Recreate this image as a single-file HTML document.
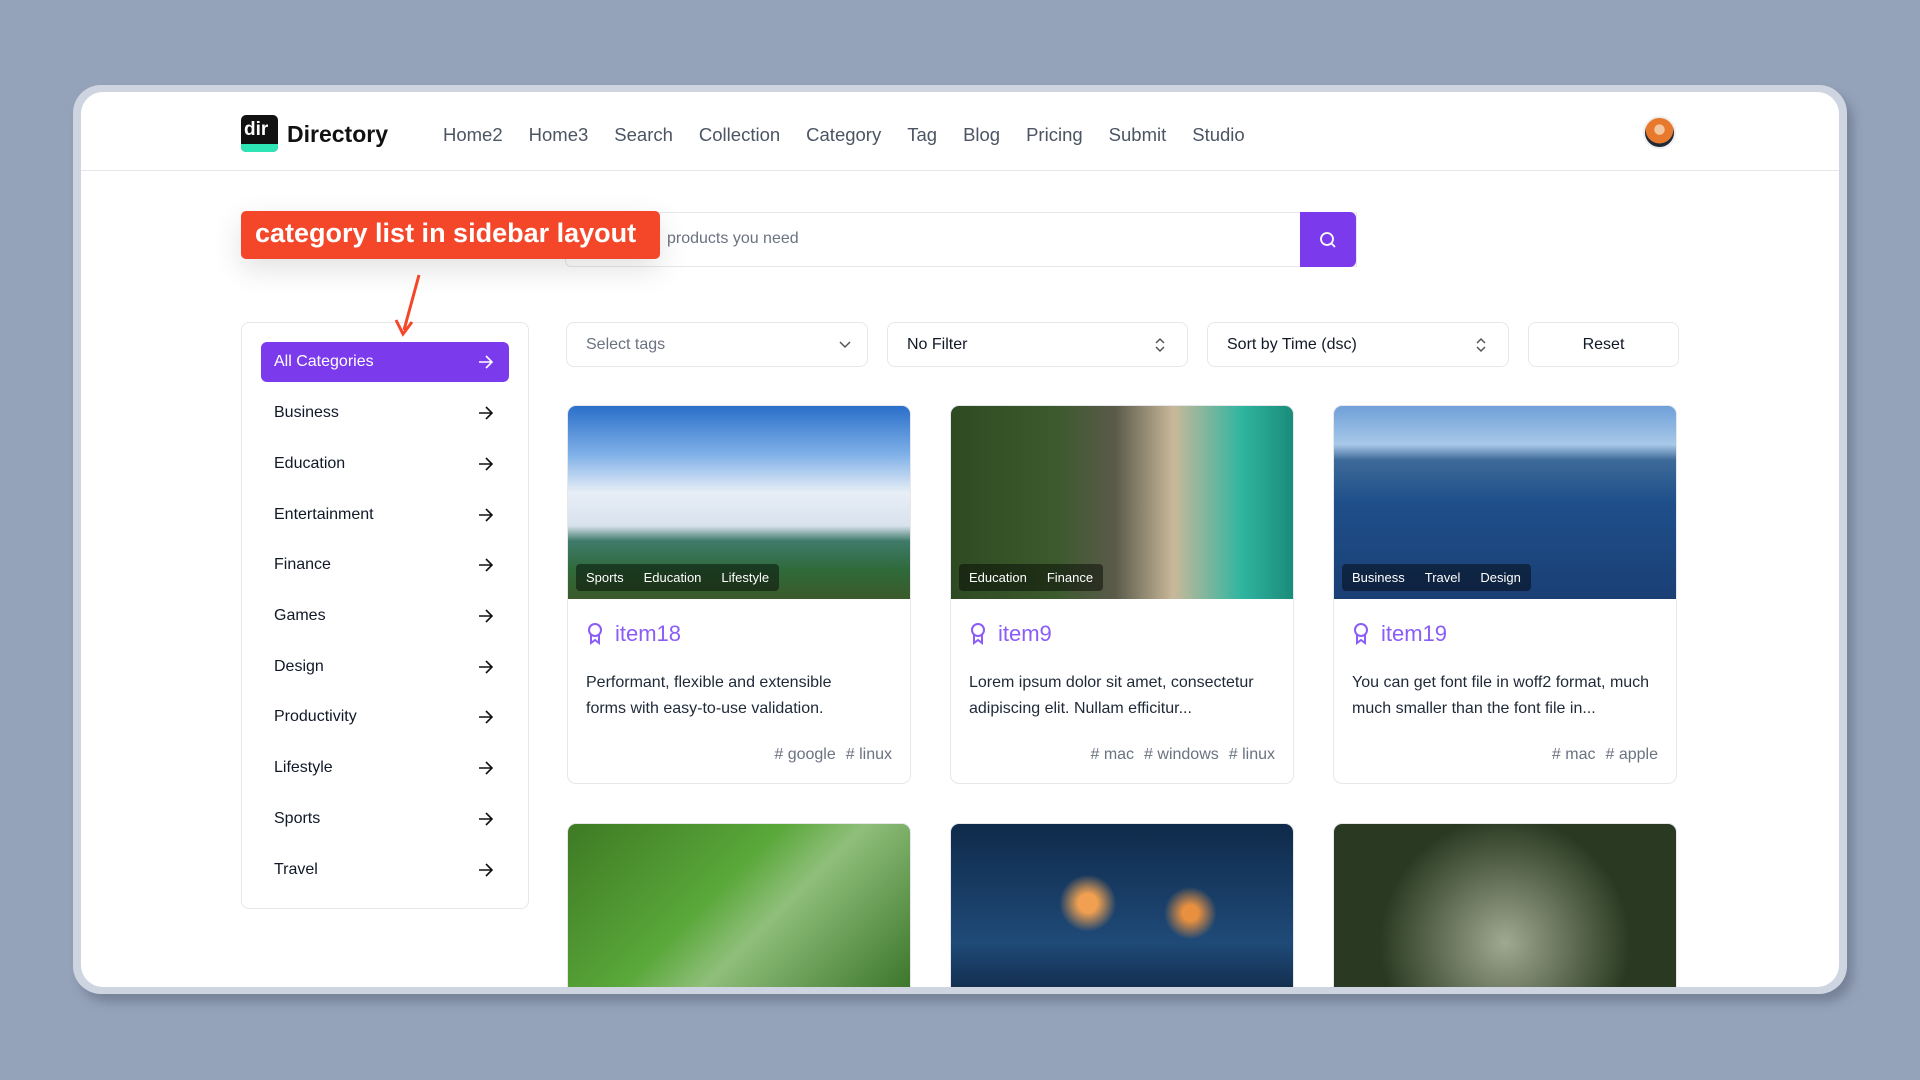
<!DOCTYPE html>
<html><head><meta charset="utf-8"><style>
*{box-sizing:border-box;margin:0;padding:0}
body{width:1920px;height:1080px;background:#95a3ba;font-family:"Liberation Sans",sans-serif;position:relative;overflow:hidden;color:#111827}
.frame{position:absolute;left:73px;top:85px;width:1774px;height:909px;background:#cfd5e0;border-radius:28px;box-shadow:6px 8px 10px rgba(60,70,90,.35)}
.inner{position:absolute;left:81px;top:92px;width:1758px;height:895px;background:#fff;border-radius:22px;overflow:hidden}
.a{position:absolute}
.nav{position:absolute;font-size:18.5px;color:#4b5563;white-space:nowrap}
.nav span{margin-right:26px}
.hdr{position:absolute;left:0;top:78px;width:100%;height:1px;background:#e5e7eb}
.box{border:1px solid #e5e7eb;border-radius:8px;background:#fff}
.cat{position:absolute;left:19px;width:248px;height:40px;font-size:16px;display:flex;align-items:center;padding-left:13px;color:#111827}
.cat svg{position:absolute;right:15px;top:13px}
.card{position:absolute;width:344px;height:379px;border:1px solid #e5e7eb;border-radius:9px;overflow:hidden;background:#fff}
.img{height:193px;position:relative}
.tags{position:absolute;left:8px;bottom:8px;display:flex;background:rgba(0,0,0,.45);border-radius:4px}
.tags span{color:#fff;font-size:13px;padding:6px 10px}
.title{position:absolute;left:19px;top:215px;font-size:22px;color:#8b5cf6;display:flex;align-items:center;gap:12px}
.desc{position:absolute;left:18px;top:264px;width:280px;font-size:16px;line-height:26px;color:#1f2937}
.ht{position:absolute;right:18px;top:340px;font-size:16px;color:#6b7280}
.ht b{font-weight:normal;margin-left:10px}
.flt{position:absolute;top:230px;height:45px;font-size:16px;display:flex;align-items:center;padding-left:19px}
</style></head><body>
<div class="frame"></div>
<div class="inner">
 <div class="a" style="left:160px;top:23px;width:37px;height:37px;background:#111;border-radius:5px;overflow:hidden">
  <div style="color:#fff;font-weight:bold;font-size:19px;position:absolute;left:3px;top:4px">dir</div>
  <div style="position:absolute;left:0;bottom:0;width:100%;height:8px;background:#2ee6b5"></div>
 </div>
 <div class="a" style="left:206px;top:29px;font-size:23px;font-weight:bold;color:#111">Directory</div>
 <div class="nav" style="left:362px;top:32px"><span>Home2</span><span>Home3</span><span>Search</span><span>Collection</span><span>Category</span><span>Tag</span><span>Blog</span><span>Pricing</span><span>Submit</span><span>Studio</span></div>
 <div class="a" style="left:1562px;top:24px;width:33px;height:33px;border-radius:50%;background:radial-gradient(circle at 50% 40%,#f3c7a0 0 22%,#e8782c 24% 60%,#1f2937 62%);border:2px solid #eee"></div>
 <div class="hdr"></div>

 <div class="a box" style="left:484px;top:120px;width:792px;height:55px;border-radius:6px 0 0 6px"></div>
 <div class="a" style="left:586px;top:138px;font-size:16px;color:#6b7280">products you need</div>
 <div class="a" style="left:1219px;top:120px;width:56px;height:55px;background:#7c3aed;border-radius:0 6px 6px 0"><svg style="position:absolute;left:19px;top:19px" width="18" height="18" viewBox="0 0 18 18" fill="none" stroke="#fff" stroke-width="1.8"><circle cx="8" cy="8" r="6"/><path d="M12.5 12.5L16 16"/></svg></div>
 <div class="a" style="left:160px;top:119px;width:419px;height:48px;background:#f4472a;border-radius:5px;box-shadow:0 10px 30px rgba(0,0,0,.12);color:#fff;font-size:27px;font-weight:bold;padding:7px 0 0 14px;white-space:nowrap">category list in sidebar layout</div>

 <div class="a box" style="left:160px;top:230px;width:288px;height:587px">
  <div class="cat" style="top:19px;background:#7c3aed;color:#fff;border-radius:6px">All Categories<svg width="16" height="14" viewBox="0 0 16 14" fill="none" stroke="#fff" stroke-width="1.6"><path d="M1 7h13M8 1l6 6-6 6"/></svg></div>
 </div>
 <svg class="a" style="left:300px;top:180px;z-index:5" width="40" height="65"><path d="M38 3L23 58" stroke="#f4472a" stroke-width="3"/><path d="M15 48L22 62L31 50" stroke="#f4472a" stroke-width="3" fill="none"/></svg>
 <div class="a" style="left:161px;top:231px;width:288px">
  <div class="cat" style="top:70px">Business<svg width="16" height="14" viewBox="0 0 16 14" fill="none" stroke="#111" stroke-width="1.6"><path d="M1 7h13M8 1l6 6-6 6"/></svg></div>
  <div class="cat" style="top:121px">Education<svg width="16" height="14" viewBox="0 0 16 14" fill="none" stroke="#111" stroke-width="1.6"><path d="M1 7h13M8 1l6 6-6 6"/></svg></div>
  <div class="cat" style="top:172px">Entertainment<svg width="16" height="14" viewBox="0 0 16 14" fill="none" stroke="#111" stroke-width="1.6"><path d="M1 7h13M8 1l6 6-6 6"/></svg></div>
  <div class="cat" style="top:222px">Finance<svg width="16" height="14" viewBox="0 0 16 14" fill="none" stroke="#111" stroke-width="1.6"><path d="M1 7h13M8 1l6 6-6 6"/></svg></div>
  <div class="cat" style="top:273px">Games<svg width="16" height="14" viewBox="0 0 16 14" fill="none" stroke="#111" stroke-width="1.6"><path d="M1 7h13M8 1l6 6-6 6"/></svg></div>
  <div class="cat" style="top:324px">Design<svg width="16" height="14" viewBox="0 0 16 14" fill="none" stroke="#111" stroke-width="1.6"><path d="M1 7h13M8 1l6 6-6 6"/></svg></div>
  <div class="cat" style="top:374px">Productivity<svg width="16" height="14" viewBox="0 0 16 14" fill="none" stroke="#111" stroke-width="1.6"><path d="M1 7h13M8 1l6 6-6 6"/></svg></div>
  <div class="cat" style="top:425px">Lifestyle<svg width="16" height="14" viewBox="0 0 16 14" fill="none" stroke="#111" stroke-width="1.6"><path d="M1 7h13M8 1l6 6-6 6"/></svg></div>
  <div class="cat" style="top:476px">Sports<svg width="16" height="14" viewBox="0 0 16 14" fill="none" stroke="#111" stroke-width="1.6"><path d="M1 7h13M8 1l6 6-6 6"/></svg></div>
  <div class="cat" style="top:527px">Travel<svg width="16" height="14" viewBox="0 0 16 14" fill="none" stroke="#111" stroke-width="1.6"><path d="M1 7h13M8 1l6 6-6 6"/></svg></div>
 </div>

 <div class="flt box" style="left:485px;width:302px;color:#6b7280">Select tags<svg style="position:absolute;right:16px;top:18px" width="12" height="8" fill="none" stroke="#555" stroke-width="1.5"><path d="M1 1l5 5 5-5"/></svg></div>
 <div class="flt box" style="left:806px;width:301px">No Filter<svg style="position:absolute;right:22px;top:14px" width="10" height="16" fill="none" stroke="#555" stroke-width="1.5"><path d="M1 6l4-4 4 4M1 10l4 4 4-4"/></svg></div>
 <div class="flt box" style="left:1126px;width:302px">Sort by Time (dsc)<svg style="position:absolute;right:22px;top:14px" width="10" height="16" fill="none" stroke="#555" stroke-width="1.5"><path d="M1 6l4-4 4 4M1 10l4 4 4-4"/></svg></div>
 <div class="flt box" style="left:1447px;width:151px;justify-content:center;padding:0">Reset</div>

 <div class="card" style="left:486px;top:313px">
  <div class="img" style="background:linear-gradient(180deg,#2a6fc9 0%,#7fb0e8 25%,#e8eef6 45%,#d8e2ee 62%,#3f7a6a 70%,#2f6a3a 85%,#3b5a2a 100%)"><div class="tags"><span>Sports</span><span>Education</span><span>Lifestyle</span></div></div>
  <div class="title"><svg width="16" height="22" viewBox="0 0 16 22" fill="none" stroke="#8b5cf6" stroke-width="2"><circle cx="8" cy="7" r="6"/><path d="M4 12v8l4-3 4 3v-8"/></svg>item18</div>
  <div class="desc">Performant, flexible and extensible forms with easy-to-use validation.</div>
  <div class="ht"><b># google</b><b># linux</b></div>
 </div>
 <div class="card" style="left:869px;top:313px">
  <div class="img" style="background:linear-gradient(90deg,#2e4a22 0%,#3b5a2c 30%,#5a5a4a 48%,#c9b89a 65%,#2fb5a0 85%,#1a8c7a 100%)"><div class="tags"><span>Education</span><span>Finance</span></div></div>
  <div class="title"><svg width="16" height="22" viewBox="0 0 16 22" fill="none" stroke="#8b5cf6" stroke-width="2"><circle cx="8" cy="7" r="6"/><path d="M4 12v8l4-3 4 3v-8"/></svg>item9</div>
  <div class="desc" style="width:310px">Lorem ipsum dolor sit amet, consectetur adipiscing elit. Nullam efficitur...</div>
  <div class="ht"><b># mac</b><b># windows</b><b># linux</b></div>
 </div>
 <div class="card" style="left:1252px;top:313px">
  <div class="img" style="background:linear-gradient(180deg,#6fa0d8 0%,#a8c8e8 20%,#3d6a99 28%,#1f4f8a 50%,#1a3f75 100%)"><div class="tags"><span>Business</span><span>Travel</span><span>Design</span></div></div>
  <div class="title"><svg width="16" height="22" viewBox="0 0 16 22" fill="none" stroke="#8b5cf6" stroke-width="2"><circle cx="8" cy="7" r="6"/><path d="M4 12v8l4-3 4 3v-8"/></svg>item19</div>
  <div class="desc" style="width:310px">You can get font file in woff2 format, much much smaller than the font file in...</div>
  <div class="ht"><b># mac</b><b># apple</b></div>
 </div>

 <div class="card" style="left:486px;top:731px;height:200px;background:linear-gradient(135deg,#3e7a24,#5aa83a 40%,#8fbf7a 55%,#2f6a20)"></div>
 <div class="card" style="left:869px;top:731px;height:200px;background:radial-gradient(circle at 40% 40%,#f0a050 0 4%,transparent 12%),radial-gradient(circle at 70% 45%,#e89040 0 3%,transparent 10%),linear-gradient(180deg,#0f2a4a,#1f4a78 60%,#0a1a30)"></div>
 <div class="card" style="left:1252px;top:731px;height:200px;background:radial-gradient(circle at 50% 60%,#a0a890,#2a3a22 60%),#1a2a18"></div>
</div>
</body></html>
